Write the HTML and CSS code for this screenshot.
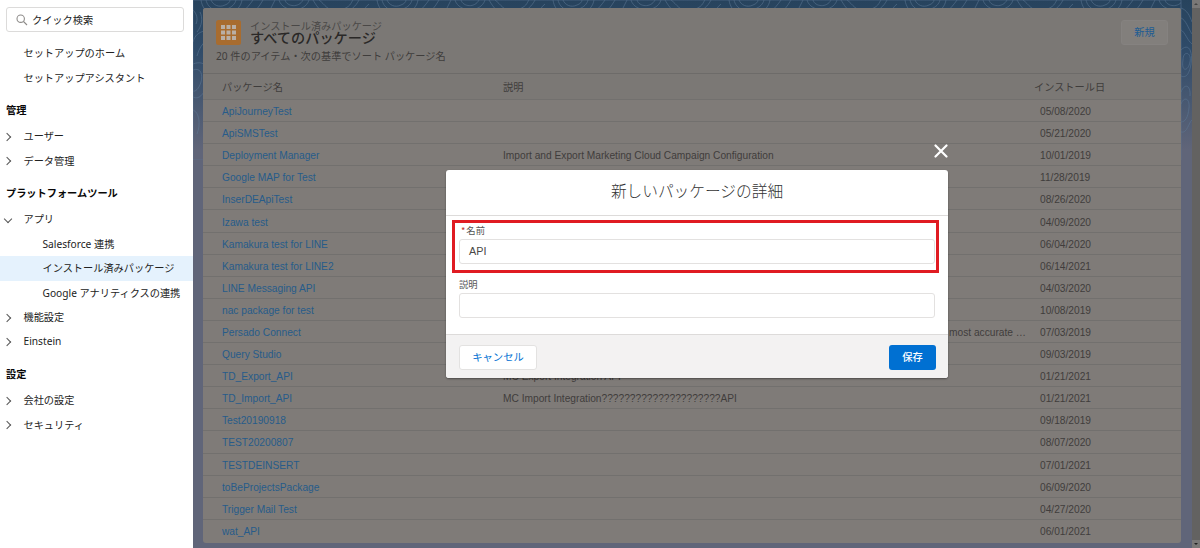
FILE: index.html
```
<!DOCTYPE html>
<html lang="ja">
<head>
  <meta charset="UTF-8">
  <title>インストール済みパッケージ</title>
  <link rel="stylesheet" href="styles.css">
</head>
<body>
  <nav class="sidebar">
    <div class="search">
      <svg width="12" height="12" viewBox="0 0 12 12"><circle cx="4.7" cy="4.7" r="3.7"/><path d="M7.5 7.5L11 11"/></svg>
      <span>クイック検索</span>
    </div>
    <ul class="menu top">
      <li>セットアップのホーム</li>
      <li>セットアップアシスタント</li>
    </ul>
    <h2>管理</h2>
    <ul class="menu">
      <li class="closed">ユーザー</li>
      <li class="closed">データ管理</li>
    </ul>
    <h2>プラットフォームツール</h2>
    <ul class="menu">
      <li class="open">アプリ</li>
      <li class="sub">Salesforce 連携</li>
      <li class="sub active">インストール済みパッケージ</li>
      <li class="sub">Google アナリティクスの連携</li>
      <li class="closed">機能設定</li>
      <li class="closed">Einstein</li>
    </ul>
    <h2>設定</h2>
    <ul class="menu">
      <li class="closed">会社の設定</li>
      <li class="closed">セキュリティ</li>
    </ul>
  </nav>

  <main>
    <svg class="contours" width="999" height="160">
      <defs>
        <pattern id="lines" width="176" height="160" patternUnits="userSpaceOnUse">
          <path d="M18 0c2 5 8 8 14 5 3-1 5-3 5-5M13 0c2 9 12 14 21 9 5-2 8-5 9-9M8 0c2 14 16 20 29 14 7-3 11-8 12-14M60 0c-6 9-16 18-28 24C14 33 4 28 0 42M70 0C62 14 50 24 34 30 18 37 8 40 4 56M82 0l-4 8M92 0c2 7 14 8 18 0M86 0c4 13 26 13 30 0M126 0c6 4 8 12 20 10s12-8 14-10M120 0c6 10 12 18 28 14 10-3 15-8 18-14M176 4c-8 6-6 16-16 22M0 70c8-3 10 5 8 12s-6 10-8 9M0 64c13-5 18 6 14 20S4 99 0 97M0 110c6 2 8 14 4 24M0 10c4 4 5 9 3 14M7 12c3 6 2 14-3 20"/>
        </pattern>
      </defs>
      <rect width="988" height="160" fill="url(#lines)"/>
      <path d="M988 8c6 2 9 8 11 14M988 18c5 2 7 10 11 16M988 30c4 2 6 10 11 14M990 60c0-10 9-8 7 2s-9 10-7-2zM988 50c8-8 12 2 10 14s-6 14-10 12M988 92c4-10 10-6 9 4M988 104c3-8 9-6 8 4s-4 14-8 14M988 132c6 2 8-10 11-12"/>
    </svg>
    <section class="card">
      <header class="card-header">
        <div class="title-row">
          <svg class="app-icon" width="25" height="25" viewBox="0 0 25 25">
            <rect class="tile" width="25" height="25" rx="2.5"/>
            <path d="M5 5h4v4H5zM10.5 5h4v4h-4zM16 5h4v4h-4zM5 10.5h4v4H5zM10.500 10.500h4v4h-4zM16 10.500h4v4h-4zM5 16h4v4H5zM10.500 16h4v4h-4zM16 16h4v4h-4z"/>
          </svg>
          <div class="titles">
            <p>インストール済みパッケージ</p>
            <h1>すべてのパッケージ</h1>
          </div>
          <button class="new">新規</button>
        </div>
        <p class="info">20 件のアイテム・次の基準でソート パッケージ名</p>
      </header>
      <div class="row head"><span>パッケージ名</span><span>説明</span><span>インストール日</span></div>
      <div id="packages"></div>
    </section>
  </main>
  <div class="scrollbar"><i class="up"></i><i class="down"></i></div>

  <div class="modal">
    <svg class="close" width="14" height="14" viewBox="0 0 14 14"><path d="M1.500 1.500l11 11M12.500 1.500l-11 11"/></svg>
    <h2>新しいパッケージの詳細</h2>
    <div class="fields">
      <label><b>*</b>名前</label>
      <div class="input">API</div>
      <label class="second">説明</label>
      <div class="input"></div>
      <div class="highlight"></div>
    </div>
    <footer>
      <button class="cancel">キャンセル</button>
      <button class="save">保存</button>
    </footer>
  </div>

  <script>
    const packages = [
      ["ApiJourneyTest", "", "05/08/2020"],
      ["ApiSMSTest", "", "05/21/2020"],
      ["Deployment Manager", "Import and Export Marketing Cloud Campaign Configuration", "10/01/2019"],
      ["Google MAP for Test", "", "11/28/2019"],
      ["InserDEApiTest", "", "08/26/2020"],
      ["Izawa test", "", "04/09/2020"],
      ["Kamakura test for LINE", "", "06/04/2020"],
      ["Kamakura test for LINE2", "", "06/14/2021"],
      ["LINE Messaging API", "", "04/03/2020"],
      ["nac package for test", "", "10/08/2019"],
      ["Persado Connect", "most accurate …", "07/03/2019"],
      ["Query Studio", "", "09/03/2019"],
      ["TD_Export_API", "MC Export Integration API", "01/21/2021"],
      ["TD_Import_API", "MC Import Integration?????????????????????API", "01/21/2021"],
      ["Test20190918", "", "09/18/2019"],
      ["TEST20200807", "", "08/07/2020"],
      ["TESTDEINSERT", "", "07/01/2021"],
      ["toBeProjectsPackage", "", "06/09/2020"],
      ["Trigger Mail Test", "", "04/27/2020"],
      ["wat_API", "", "06/01/2021"]
    ];

    document.getElementById("packages").innerHTML = packages.map(([name, text, date]) => `
      <div class="row">
        <a>${name}</a>
        <span class="${text.endsWith("…") ? "cut" : ""}">${text}</span>
        <span class="date">${date}</span>
      </div>
    `).join("");
  </script>
</body>
</html>
```
FILE: styles.css
```
* { box-sizing: border-box; }
body {
  margin: 0;
  height: 548px;
  display: flex;
  overflow: hidden;
  position: relative;
  font-family: "Liberation Sans", "Noto Sans CJK JP", sans-serif;
  font-size: 10.2px;
}
h1, h2, p, ul { margin: 0; padding: 0; }
li { list-style: none; }
button { font-family: "Noto Sans CJK JP", sans-serif; font-size: 10.3px; padding: 0 0 2px; border-radius: 3px; }

.sidebar {
  width: 193px;
  flex: none;
  background: #fff;
  padding-top: 7px;
  font-family: "Noto Sans", "Noto Sans CJK JP", sans-serif;
  font-size: 10.2px;
  color: #222;
}
.search {
  display: flex;
  align-items: center;
  gap: 4px;
  height: 25px;
  margin: 0 9px 9px 6px;
  padding-left: 9px;
  border: 1px solid #dcdbda;
  border-radius: 3px;
}
.search svg { fill: none; stroke: #8d8b89; stroke-width: 1.1; }
.menu li {
  display: flex;
  align-items: center;
  height: 24.5px;
  padding: 0 0 1px 23.5px;
  white-space: nowrap;
}
.menu li.closed, .menu li.open { padding-left: 4.5px; }
.closed::before, .open::before {
  content: "";
  width: 5px;
  height: 5px;
  margin: 2px 13px 0 0;
  border: solid #555;
  border-width: 1px 1px 0 0;
}
.closed::before { transform: translateX(-1px) rotate(45deg); }
.open::before { transform: translateY(-1px) rotate(135deg); }
.menu li.sub { padding-left: 42.5px; }
.menu li.active { background: #e5f2fd; }
.sidebar h2 { font-size: 10.2px; line-height: 14px; margin: 13px 0 7px 6px; color: #080707; }

main {
  flex: 1;
  position: relative;
  padding: 8px 11px 5px 10px;
  background: linear-gradient(#27435d 0, #2f4b69 50px, #606579 150px);
}
.contours { position: absolute; top: 0; left: 0; fill: none; stroke: #5e7a97; stroke-width: .7; opacity: .75; }
.card { position: relative; height: 535px; border-radius: 3px; background: #7f7b78; overflow: hidden; color: #3f3d3c; }
.card-header { height: 66px; padding: 12px 13px 0; background: #7b7875; border-bottom: 1px solid #6d6b69; }
.title-row { display: flex; height: 28px; }
.app-icon .tile { fill: #a86c2f; }
.app-icon { fill: #b9afa5; }
.titles { margin-left: 9px; flex: 1; font-family: "Noto Sans CJK JP", sans-serif; }
.titles p { font-size: 10.2px; line-height: 11px; color: #4a4847; }
.titles h1 { font-size: 14.2px; line-height: 13px; font-weight: 500; color: #2a2827; }
.new { width: 47px; height: 25px; border: 1px solid #858280; background: #827f7c; color: #205c93; }
.info { font-family: "Noto Sans", "Noto Sans CJK JP", sans-serif; font-size: 10.2px; line-height: 16px; }

.row {
  display: grid;
  grid-template-columns: 281px 537px 1fr;
  align-items: center;
  height: 22.1px;
  padding: 2px 0 0 19px;
  border-bottom: 1px solid #72706e;
  white-space: nowrap;
}
.row:last-child { border-bottom: 0; }
.row.head { grid-template-columns: 281px 531px 1fr; height: 26px; padding-top: 0; background: #7b7875; font-family: "Noto Sans CJK JP", sans-serif; font-size: 10.2px; }
.row a { color: #275b8a; }
.cut { text-align: right; padding-right: 14px; }

.scrollbar {
  width: 8px;
  display: flex;
  flex-direction: column;
  justify-content: space-between;
  align-items: center;
  background: linear-gradient(#7a7877 8px, #636261 8px, #636261 540px, #7a7877 540px);
  padding: 1px 0;
}
.scrollbar i { border: 2px solid transparent; }
.scrollbar .up { border-bottom-color: #444; }
.scrollbar .down { border-top-color: #222; }

.modal {
  position: absolute;
  left: 446px;
  top: 170px;
  width: 502px;
  height: 208px;
  display: flex;
  flex-direction: column;
  background: #fff;
  border-radius: 3px;
  box-shadow: 0 1px 2px rgba(0, 0, 0, .4);
  color: #4a4846;
}
.close { position: absolute; top: -26px; right: 0; stroke: #fff; stroke-width: 2.2; stroke-linecap: round; }
.modal h2 {
  height: 46px;
  text-align: center;
  font: 300 15.7px/42px "Noto Sans CJK JP", sans-serif;
  color: #333;
  border-bottom: 1px solid #dddbda;
}
.fields { flex: 1; position: relative; padding: 6px 13px 0; }
.fields label { display: block; height: 17px; line-height: 16px; font-family: "Noto Sans CJK JP", sans-serif; font-size: 9.3px; color: #555; }
.fields label b { color: #c23934; font-weight: 400; margin: 0 1px 0 2px; }
.fields label.second { margin-top: 12px; }
.input { height: 25px; line-height: 23px; padding-left: 9px; font-size: 10.8px; border: 1px solid #e3e1e0; border-radius: 3px; }
.highlight { position: absolute; left: 6px; top: 4px; width: 487px; height: 53px; border: 3px solid #e01b22; }
.modal footer {
  height: 44px;
  display: flex;
  justify-content: space-between;
  padding: 10px 12px 0 13px;
  background: #f3f2f2;
  border-top: 1px solid #dddbda;
  border-radius: 0 0 3px 3px;
}
.modal button { height: 25px; }
.cancel { width: 78px; background: #fff; border: 1px solid #e3e2e1; color: #0070d2; }
.save { width: 47px; background: #0070d2; border: 0; color: #fff; font-weight: 500; }
```
